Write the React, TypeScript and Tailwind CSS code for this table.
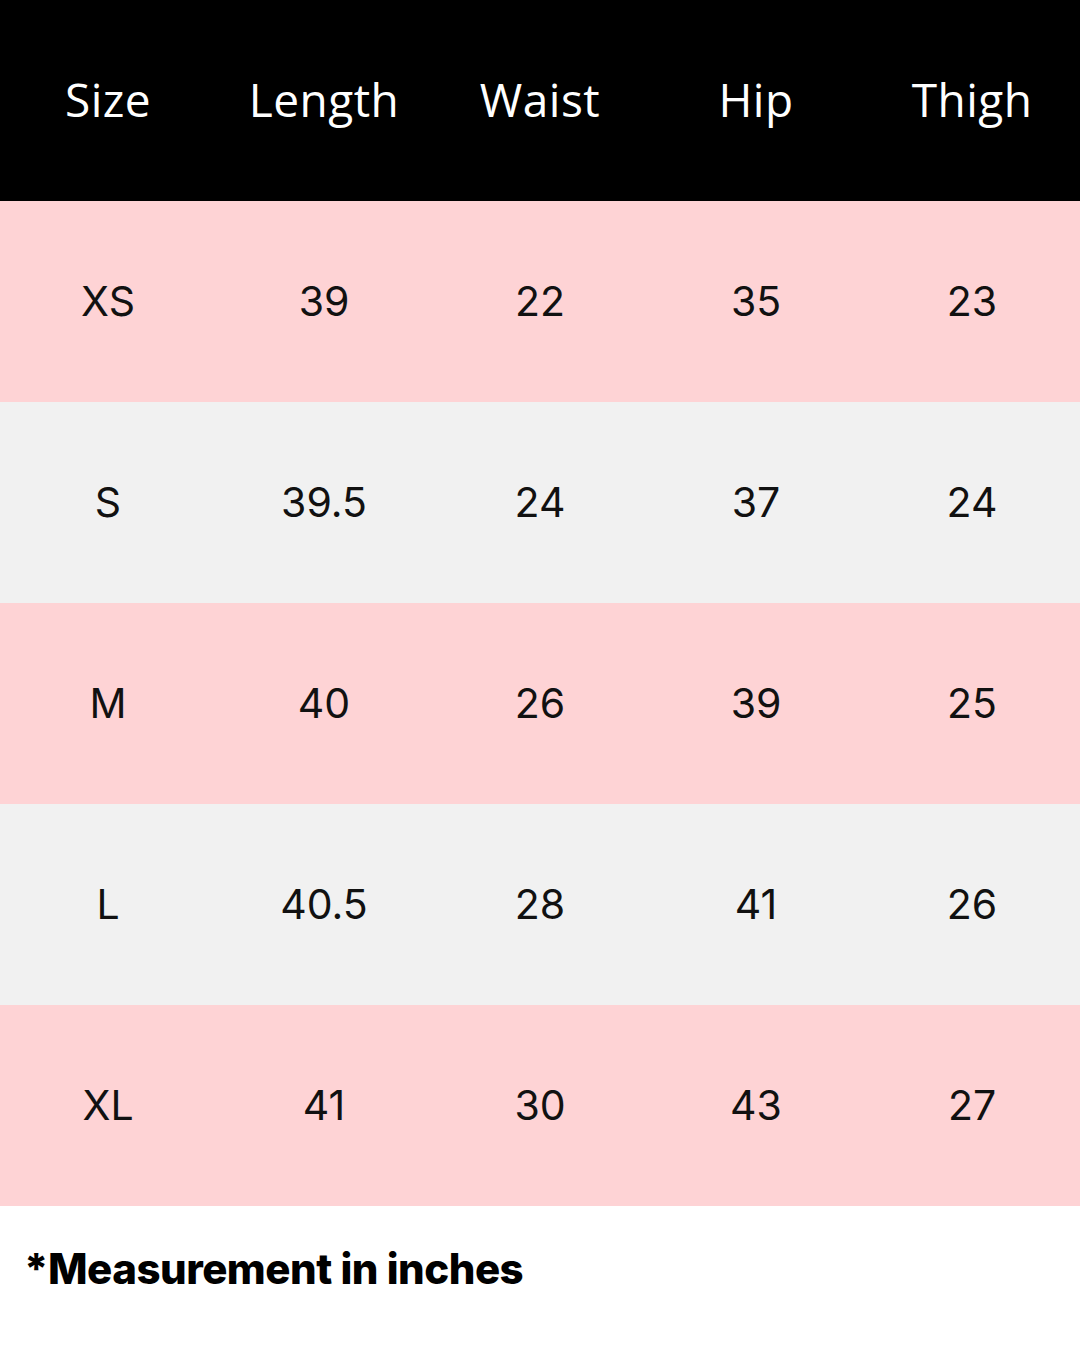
import React from "react";

const rows = [
  ["XS", "39", "22", "35", "23"],
  ["S", "39.5", "24", "37", "24"],
  ["M", "40", "26", "39", "25"],
  ["L", "40.5", "28", "41", "26"],
  ["XL", "41", "30", "43", "27"],
];

const headers = ["Size", "Length", "Waist", "Hip", "Thigh"];

export default function App() {
  return (
    <div className="w-[1080px] h-[1350px] bg-white flex flex-col">
      <div className="h-[201px] bg-black grid grid-cols-5 items-center">
        {headers.map((h) => (
          <div
            key={h}
            className="text-center text-white text-[46px] tracking-[0.01em] pb-[2px]"
            style={{ fontFamily: '"Open Sans", "Noto Sans", sans-serif', fontWeight: 400 }}
          >
            {h}
          </div>
        ))}
      </div>
      {rows.map((r, i) => (
        <div
          key={r[0]}
          className={`h-[201px] grid grid-cols-5 items-center ${i % 2 === 0 ? "bg-[#fed3d5]" : "bg-[#f1f1f1]"}`}
        >
          {r.map((c, j) => (
            <div
              key={j}
              className="text-center text-[#111] text-[41px]"
              style={{ fontFamily: 'Inter, "Liberation Sans", sans-serif', fontWeight: 400 }}
            >
              {c}
            </div>
          ))}
        </div>
      ))}
      <div className="flex-1 flex items-center px-[24px] pb-[20px]">
        <div
          className="text-black text-[42px] font-extrabold tracking-[-0.012em]"
          style={{ fontFamily: 'Inter, "Liberation Sans", sans-serif' }}
        >
          *Measurement in inches
        </div>
      </div>
    </div>
  );
}
